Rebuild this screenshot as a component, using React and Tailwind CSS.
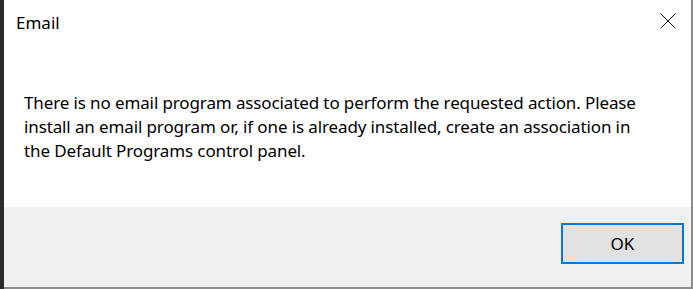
import React from 'react';

const font = { fontFamily: '"Noto Sans", "Open Sans", sans-serif' };

const App = () => {
  return (
    <div className="flex w-[693px] h-[289px] bg-white" style={font}>
      <div className="w-[4px] h-full bg-[#2d2926]"></div>
      <div className="flex flex-col flex-1 h-full border-r-[2px] border-b-[2px] border-[#8c8c8c]">
        <div className="flex items-start justify-between h-[58px]">
          <div className="pl-[12px] pt-[11px] text-[17px] leading-[24px] text-black">Email</div>
          <button className="mt-[13px] mr-[15px] w-[16px] h-[16px] flex items-center justify-center">
            <svg width="16" height="16" viewBox="0 0 16 16" fill="none">
              <path d="M0.5 0.5 L15.5 15.5 M15.5 0.5 L0.5 15.5" stroke="#111" strokeWidth="1" />
            </svg>
          </button>
        </div>
        <div className="flex-1 bg-white pl-[20px] pt-[33px] text-[17px] leading-[24px] tracking-[-0.12px] text-black whitespace-nowrap">
          <div>There is no email program associated to perform the requested action. Please</div>
          <div>install an email program or, if one is already installed, create an association in</div>
          <div>the Default Programs control panel.</div>
        </div>
        <div className="h-[80px] bg-[#f0f0f0] flex items-start justify-end pt-[16px] pr-[7px]">
          <button className="w-[123px] h-[41px] bg-[#e1e1e1] border-[2px] border-[#0078d7] text-[17px] text-black">
            OK
          </button>
        </div>
      </div>
    </div>
  );
};

export default App;
